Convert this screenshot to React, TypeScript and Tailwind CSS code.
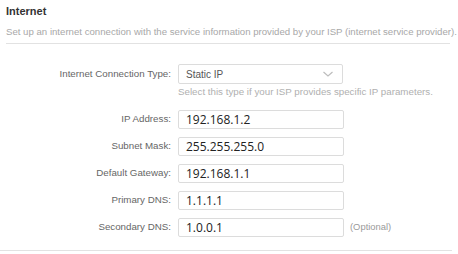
import React from "react";

const Chevron = () => (
  <svg width="12" height="8" viewBox="0 0 12 8" fill="none">
    <path d="M1.5 2 L6 6 L10.5 2" stroke="#bdbdbd" strokeWidth="1.2" />
  </svg>
);

function Row({ label, value, extra }: { label: string; value: string; extra?: string }) {
  return (
    <div className="flex items-center h-[19px]">
      <div className="w-[172px] shrink-0 text-right pr-[1px] text-[9.75px] text-[#666]">{label}</div>
      <div className="ml-[6px] w-[166px] h-[19px] border border-[#dcdcdc] rounded-[2px] bg-white flex items-center pl-[7px] text-[12px] text-[#222] leading-none" style={{ fontFamily: '"Open Sans", sans-serif' }}>
        {value}
      </div>
      {extra && <div className="ml-[6px] text-[9.4px] text-[#9a9a9a]">{extra}</div>}
    </div>
  );
}

export default function App() {
  return (
    <div className="w-[458px] h-[254px] bg-white overflow-hidden" style={{ fontFamily: '"Liberation Sans", Arial, sans-serif' }}>
      <div className="px-[6px] pt-[4px]">
        <div className="text-[11px] font-bold text-[#333] leading-[14px]">Internet</div>
        <div className="mt-[8px] text-[9.65px] text-[#a8a8a8] leading-[12px] whitespace-nowrap">
          Set up an internet connection with the service information provided by your ISP (internet service provider).
        </div>
        <div className="mt-[5px] border-t border-[#e2e2e2] mr-[2px]" />
      </div>
      <div className="pt-[20px]">
        <div className="flex items-center h-[20px]">
          <div className="w-[172px] shrink-0 text-right pr-[1px] text-[9.75px] text-[#666]">Internet Connection Type:</div>
          <div className="ml-[6px] w-[165px] h-[20px] border border-[#dcdcdc] rounded-[2px] bg-white flex items-center justify-between pl-[7px] pr-[8px] text-[10px] text-[#555]">
            <span>Static IP</span>
            <Chevron />
          </div>
        </div>
        <div className="ml-[178px] mt-[2px] text-[9.75px] text-[#b0b0b0] leading-[12px] whitespace-nowrap">
          Select this type if your ISP provides specific IP parameters.
        </div>
        <div className="mt-[12px] flex flex-col gap-[8px]">
          <Row label="IP Address:" value="192.168.1.2" />
          <Row label="Subnet Mask:" value="255.255.255.0" />
          <Row label="Default Gateway:" value="192.168.1.1" />
          <Row label="Primary DNS:" value=" 1.1.1.1" />
          <Row label="Secondary DNS:" value=" 1.0.0.1" extra="(Optional)" />
        </div>
        <div className="mt-[13px] border-t border-[#e2e2e2] mr-[6px]" />
      </div>
    </div>
  );
}
